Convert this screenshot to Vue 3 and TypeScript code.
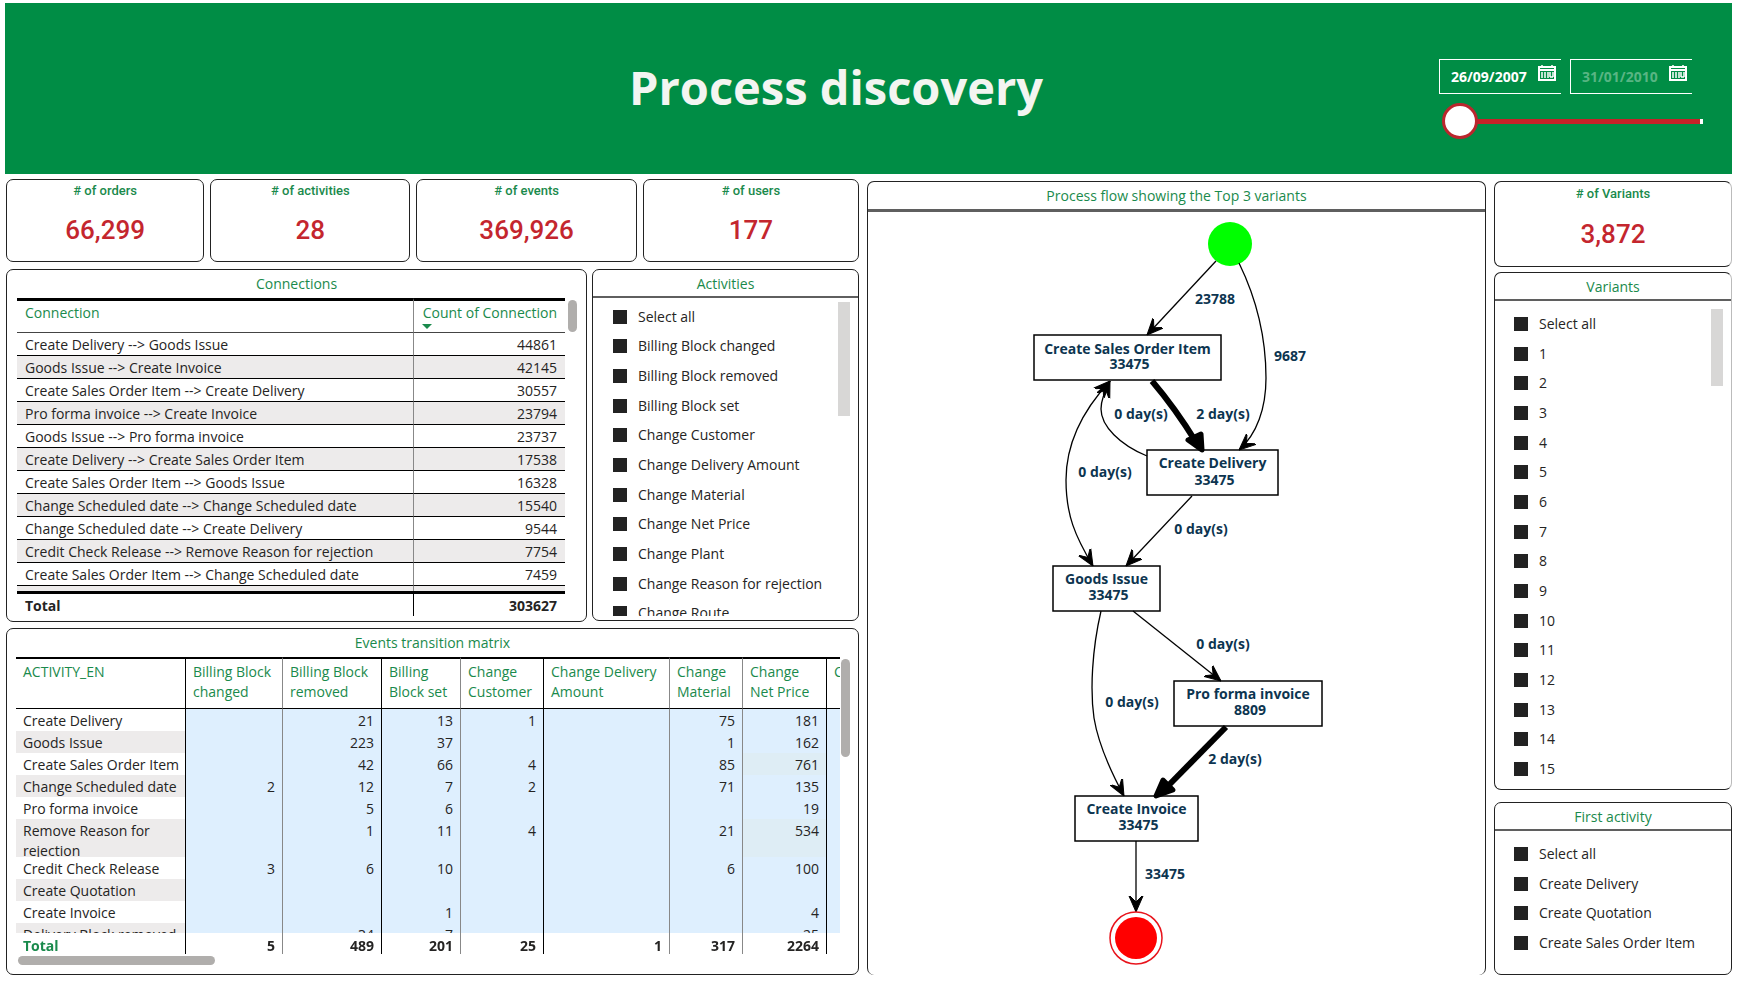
<script setup lang="ts">
import { ref } from 'vue'

interface Kpi { label: string; value: string }
interface Connection { name: string; count: number | null }
interface MatrixColumn { lines: string[]; width: number; total: string; strong: boolean }
interface MatrixRow { name: string; values: string[]; tall?: boolean }
interface FlowNode { name: string; count: string; x: number; y: number; w: number; h: number; nameY: number; countY: number }
interface FlowLabel { text: string; x: number; y: number }

const kpis: Kpi[] = [
  { label: '# of orders', value: '66,299' },
  { label: '# of activities', value: '28' },
  { label: '# of events', value: '369,926' },
  { label: '# of users', value: '177' },
]

const connections: Connection[] = [
  { name: 'Create Delivery --> Goods Issue', count: 44861 },
  { name: 'Goods Issue --> Create Invoice', count: 42145 },
  { name: 'Create Sales Order Item --> Create Delivery', count: 30557 },
  { name: 'Pro forma invoice --> Create Invoice', count: 23794 },
  { name: 'Goods Issue --> Pro forma invoice', count: 23737 },
  { name: 'Create Delivery --> Create Sales Order Item', count: 17538 },
  { name: 'Create Sales Order Item --> Goods Issue', count: 16328 },
  { name: 'Change Scheduled date --> Change Scheduled date', count: 15540 },
  { name: 'Change Scheduled date --> Create Delivery', count: 9544 },
  { name: 'Credit Check Release --> Remove Reason for rejection', count: 7754 },
  { name: 'Create Sales Order Item --> Change Scheduled date', count: 7459 },
  { name: '', count: null },
]

const activities: string[] = [
  'Select all', 'Billing Block changed', 'Billing Block removed', 'Billing Block set',
  'Change Customer', 'Change Delivery Amount', 'Change Material', 'Change Net Price',
  'Change Plant', 'Change Reason for rejection', 'Change Route',
]
const variants: string[] = ['Select all', ...Array.from({ length: 15 }, (_, i) => String(i + 1))]
const firstActivities: string[] = ['Select all', 'Create Delivery', 'Create Quotation', 'Create Sales Order Item']

const columns: MatrixColumn[] = [
  { lines: ['Billing Block', 'changed'], width: 97, total: '5', strong: false },
  { lines: ['Billing Block', 'removed'], width: 99, total: '489', strong: true },
  { lines: ['Billing', 'Block set'], width: 79, total: '201', strong: false },
  { lines: ['Change', 'Customer'], width: 83, total: '25', strong: true },
  { lines: ['Change Delivery', 'Amount'], width: 126, total: '1', strong: false },
  { lines: ['Change', 'Material'], width: 73, total: '317', strong: false },
  { lines: ['Change', 'Net Price'], width: 84, total: '2264', strong: true },
  { lines: ['Change Plant', ''], width: 100, total: '', strong: false },
]

const matrix: MatrixRow[] = [
  { name: 'Create Delivery', values: ['', '21', '13', '1', '', '75', '181', ''] },
  { name: 'Goods Issue', values: ['', '223', '37', '', '', '1', '162', ''] },
  { name: 'Create Sales Order Item', values: ['', '42', '66', '4', '', '85', '761', ''] },
  { name: 'Change Scheduled date', values: ['2', '12', '7', '2', '', '71', '135', ''] },
  { name: 'Pro forma invoice', values: ['', '5', '6', '', '', '', '19', ''] },
  { name: 'Remove Reason for rejection', values: ['', '1', '11', '4', '', '21', '534', ''], tall: true },
  { name: 'Credit Check Release', values: ['3', '6', '10', '', '', '6', '100', ''] },
  { name: 'Create Quotation', values: ['', '', '', '', '', '', '', ''] },
  { name: 'Create Invoice', values: ['', '', '1', '', '', '', '4', ''] },
  { name: 'Delivery Block removed', values: ['', '34', '7', '', '', '', '25', ''] },
]

const nodes: FlowNode[] = [
  { name: 'Create Sales Order Item', count: '33475', x: 34, y: 135, w: 187, h: 45, nameY: 154, countY: 169 },
  { name: 'Create Delivery', count: '33475', x: 147, y: 250, w: 131, h: 45, nameY: 268, countY: 285 },
  { name: 'Goods Issue', count: '33475', x: 53, y: 366, w: 107, h: 45, nameY: 384, countY: 400 },
  { name: 'Pro forma invoice', count: '8809', x: 174, y: 481, w: 148, h: 45, nameY: 499, countY: 515 },
  { name: 'Create Invoice', count: '33475', x: 75, y: 596, w: 123, h: 45, nameY: 614, countY: 630 },
]

const labels: FlowLabel[] = [
  { text: '23788', x: 215, y: 104 },
  { text: '9687', x: 290, y: 161 },
  { text: '0 day(s)', x: 141, y: 219 },
  { text: '2 day(s)', x: 223, y: 219 },
  { text: '0 day(s)', x: 105, y: 277 },
  { text: '0 day(s)', x: 201, y: 334 },
  { text: '0 day(s)', x: 223, y: 449 },
  { text: '0 day(s)', x: 132, y: 507 },
  { text: '2 day(s)', x: 235, y: 564 },
  { text: '33475', x: 165, y: 679 },
]

const startDate = ref('26/09/2007')
const endDate = ref('31/01/2010')
const rangePosition = ref(0)
</script>

<template>
  <div class="page">
    <header class="banner">
      <h1>Process discovery</h1>
      <div class="period">
        <div class="dates">
          <div class="date">
            <input v-model="startDate" type="text" aria-label="Start date" />
            <button type="button" aria-label="Pick start date">
              <svg viewBox="0 0 18 16"><path d="M1 2h16v13H1z M1 5h16" /><path d="M4 0v3 M14 0v3 M4 7v6 M7 7v6 M10 7v6 M12 7v5 M15 7v5 M12 12h3" /></svg>
            </button>
          </div>
          <div class="date off">
            <input v-model="endDate" type="text" aria-label="End date" />
            <button type="button" aria-label="Pick end date">
              <svg viewBox="0 0 18 16"><path d="M1 2h16v13H1z M1 5h16" /><path d="M4 0v3 M14 0v3 M4 7v6 M7 7v6 M10 7v6 M12 7v5 M15 7v5 M12 12h3" /></svg>
            </button>
          </div>
        </div>
        <input v-model="rangePosition" class="slider" type="range" min="0" max="100" aria-label="Date range" />
      </div>
    </header>

    <main class="board">
      <div class="left">
        <div class="kpis">
          <section v-for="k in kpis" :key="k.label" class="panel kpi">
            <h2>{{ k.label }}</h2>
            <p>{{ k.value }}</p>
          </section>
        </div>

        <div class="middle">
          <section class="panel connections">
            <h2 class="title">Connections</h2>
            <div class="scroller">
              <div class="clip">
                <table class="conn">
                  <thead>
                    <tr>
                      <th scope="col">Connection</th>
                      <th scope="col" class="num">Count of Connection<svg class="sort" viewBox="0 0 10 5"><path d="M0 0h10L5 5z" /></svg></th>
                    </tr>
                  </thead>
                  <tbody>
                    <tr v-for="(c, i) in connections" :key="i">
                      <td>{{ c.name }}</td>
                      <td class="num">{{ c.count }}</td>
                    </tr>
                  </tbody>
                  <tfoot>
                    <tr><td>Total</td><td class="num">303627</td></tr>
                  </tfoot>
                </table>
              </div>
              <div class="thumb"></div>
            </div>
          </section>

          <section class="panel slicer activities">
            <h2 class="title ruled">Activities</h2>
            <div class="scroller">
              <ul>
                <li v-for="a in activities" :key="a"><label><input type="checkbox" />{{ a }}</label></li>
              </ul>
              <div class="bar"></div>
            </div>
          </section>
        </div>

        <section class="panel events">
          <h2 class="title">Events transition matrix</h2>
          <div class="scroller">
            <div class="clip">
              <table class="matrix">
                <colgroup>
                  <col class="first" />
                  <col v-for="(c, i) in columns" :key="i" :style="{ width: c.width + 'px' }" />
                </colgroup>
                <thead>
                  <tr>
                    <th scope="col" class="strong">ACTIVITY_EN</th>
                    <th v-for="(c, i) in columns" :key="i" scope="col" :class="{ strong: c.strong }">{{ c.lines[0] }}<br />{{ c.lines[1] }}</th>
                  </tr>
                </thead>
                <tbody>
                  <tr v-for="r in matrix" :key="r.name" :class="{ tall: r.tall }">
                    <th scope="row" class="strong"><div>{{ r.name }}</div></th>
                    <td v-for="(v, i) in r.values" :key="i" :class="{ strong: columns[i].strong, warm: Number(v) > 500 }">{{ v }}</td>
                  </tr>
                </tbody>
                <tfoot>
                  <tr>
                    <th scope="row" class="strong">Total</th>
                    <td v-for="(c, i) in columns" :key="i" :class="{ strong: c.strong }">{{ c.total }}</td>
                  </tr>
                </tfoot>
              </table>
            </div>
            <div class="thumb"></div>
          </div>
          <div class="hthumb"></div>
        </section>
      </div>

      <section class="panel flow">
        <h2 class="title">Process flow showing the Top 3 variants</h2>
        <svg class="graph" viewBox="-132 12 617 763" role="img" aria-label="Process flow">
          <defs>
            <marker id="vee" viewBox="0 0 16 16" refX="16" refY="8" markerWidth="16" markerHeight="16" markerUnits="userSpaceOnUse" orient="auto-start-reverse">
              <path d="M16 8L0 15L0 14L6 8L0 2L0 1z" stroke="#000" stroke-linejoin="round" />
            </marker>
          </defs>
          <circle cx="230" cy="44" r="22" fill="#0f0" />
          <g class="edges">
            <path d="M216 61L147 135" />
            <path d="M239 63C261 108 266 148 266 178C266 208 257 234 239 250" />
            <path d="M147 256C120 245 101 226 101 209C101 200 105 192 110 181" />
            <path class="both" d="M110 181C85 208 66 240 66 280C66 315 75 336 93 366" />
            <path d="M192 296L126 366" />
            <path d="M133 411L221 481" />
            <path d="M101 411C92 450 90 490 94 518C98 542 111 572 124 596" />
            <path d="M136 641V712" />
          </g>
          <g class="heavy">
            <path d="M152 181Q175 208 196 242" />
            <path d="M226 527L164 590" />
          </g>
          <g class="heads">
            <path d="M188 240L201 234L202 250z" />
            <path d="M163 580L173 590L156 596z" />
          </g>
          <g v-for="n in nodes" :key="n.name">
            <rect :x="n.x" :y="n.y" :width="n.w" :height="n.h" />
            <text :x="n.x + n.w / 2" :y="n.nameY">{{ n.name }}</text>
            <text :x="n.x + n.w / 2 + 2" :y="n.countY">{{ n.count }}</text>
          </g>
          <text v-for="(l, i) in labels" :key="i" :x="l.x" :y="l.y">{{ l.text }}</text>
          <circle cx="136" cy="738" r="26" fill="#fff" stroke="#e8141c" stroke-width="1.5" />
          <circle cx="136" cy="738" r="21" fill="#f00" />
        </svg>
      </section>

      <div class="right">
        <section class="panel kpi open">
          <h2># of Variants</h2>
          <p>3,872</p>
        </section>
        <section class="panel slicer variants open">
          <h2 class="title ruled">Variants</h2>
          <div class="scroller">
            <ul>
              <li v-for="v in variants" :key="v"><label><input type="checkbox" />{{ v }}</label></li>
            </ul>
            <div class="bar"></div>
          </div>
        </section>
        <section class="panel slicer first-activity">
          <h2 class="title ruled">First activity</h2>
          <div class="scroller">
            <ul>
              <li v-for="f in firstActivities" :key="f"><label><input type="checkbox" />{{ f }}</label></li>
            </ul>
          </div>
        </section>
      </div>
    </main>
  </div>
</template>

<style>
body { margin: 0; background: #fff; }
</style>

<style scoped>
* { box-sizing: border-box; }
.page {
  min-height: 100vh;
  padding: 3px 5px 6px;
  display: flex;
  flex-direction: column;
  gap: 5px;
  color: #252423;
  font: 14px/20px "Open Sans", "Noto Sans", sans-serif;
}
h1, h2, p, ul { margin: 0; padding: 0; }

.banner {
  display: grid;
  grid-template-columns: 228px 1fr 293px;
  height: 171px;
  background: #008d45;
}
h1 {
  grid-column: 2;
  padding-top: 50px;
  text-align: center;
  color: #f3f5f1;
  font: 700 47px/68px "Open Sans", sans-serif;
}
.period { padding-top: 56px; }
.dates { display: flex; gap: 9px; }
.date {
  display: flex;
  width: 122px;
  height: 35px;
  border: 1px solid #fff;
  border-right: 0;
}
.date input {
  flex: 1;
  min-width: 0;
  padding: 1px 0 0 11px;
  border: 0;
  background: none;
  color: #fff;
  font: 700 14px/20px "Noto Sans", sans-serif;
}
.date.off input { color: #58b583; }
.date button { align-self: flex-start; width: 23px; padding: 5px 5px 0 0; border: 0; background: none; }
.date svg { display: block; width: 18px; height: 16px; fill: none; stroke: #fff; stroke-width: 2; }
.date svg path + path { stroke-width: 1.5; }
.slider {
  appearance: none;
  display: block;
  width: 261px;
  height: 36px;
  margin: 9px 0 0 3px;
  background: linear-gradient(90deg, #c62128 248px, #fff 248px) 10px center / 251px 5px no-repeat;
  border-radius: 3px;
}
.slider::-webkit-slider-thumb {
  appearance: none;
  width: 36px;
  height: 36px;
  border: 3px solid #bb262d;
  border-radius: 50%;
  background: #fff;
}

.board { flex: 1; display: grid; grid-template-columns: 853fr 619fr 238fr; gap: 8px; padding-left: 1px; }
.left { display: grid; grid-template-rows: 84px 353px 1fr; gap: 6px; min-width: 0; }
.kpis { display: grid; grid-template-columns: 198fr 200fr 220fr 216fr; gap: 6px; padding-bottom: 1px; }
.middle { display: grid; grid-template-columns: 581fr 267fr; gap: 5px; }
.right { display: grid; grid-template-rows: 86px 518px 1fr; row-gap: 5px; margin-top: 2px; }
.panel { border: 1px solid #222; border-radius: 7px; min-width: 0; overflow: hidden; display: flex; flex-direction: column; }
.open { border-right-color: #bbb; }

.kpi { text-align: center; }
.kpi h2 { padding-top: 3px; color: #1a8a4c; font: 500 13px/16px Roboto, sans-serif; }
.kpi p { padding-top: 14px; color: #c4262e; font: 500 26px/34px Roboto, sans-serif; }
.right .kpi h2 { padding-top: 4px; }
.right .kpi p { padding-top: 15px; }

.title { height: 28px; color: #1a8a4c; text-align: center; font-weight: 400; font-size: 14px; line-height: 28px; }
.title.ruled { border-bottom: 2px solid #5f5f5f; }
.scroller { display: flex; min-height: 0; }
.clip { flex: 1; min-width: 0; overflow: hidden; }
.thumb { width: 9px; border-radius: 5px; background: #b0aeac; }
table { border-collapse: separate; border-spacing: 0; table-layout: fixed; }
th { font-weight: 400; text-align: left; color: #1a8a4c; }

.connections .scroller { padding: 0 9px 0 10px; gap: 3px; }
.connections .clip { height: 318px; }
.connections .thumb { height: 32px; margin-top: 2px; }
.conn { width: 100%; }
.conn th, .conn td { padding: 0 8px; white-space: nowrap; }
.conn .num { width: 151px; text-align: right; }
.conn th { position: relative; height: 35px; border-top: 3px solid #000; border-bottom: 1px solid #444; vertical-align: top; line-height: 24px; }
.conn th:first-child, .conn tbody td:first-child { border-right: 1px solid #888; }
.sort { position: absolute; left: 8px; bottom: 3px; width: 10px; height: 5px; fill: #1a8a4c; }
.conn tbody td { height: 23px; padding-top: 2px; border-bottom: 1px solid #000; line-height: 20px; }
.conn tbody tr:nth-child(even) td { background: #edebeb; }
.conn tfoot td { position: sticky; bottom: 0; height: 25px; padding-top: 2px; background: #fff; border-top: 3px solid #000; font-weight: 700; }
.conn tfoot td:first-child { border-right: 1px solid #000; }

.slicer ul { flex: 1; display: grid; grid-auto-rows: 1fr; list-style: none; }
.slicer label { display: flex; align-items: center; gap: 11px; height: 100%; white-space: nowrap; }
.slicer input { appearance: none; width: 14px; height: 14px; margin: 0; background: #222; }
.bar { width: 12px; background: #d8d7d6; }
.activities { margin-bottom: 1px; }
.activities .scroller { height: 318px; padding: 4px 8px 0 20px; overflow: hidden; }
.activities ul { height: 326px; }
.activities .bar { height: 114px; }
.variants .scroller { padding: 8px 8px 0 19px; }
.variants ul { height: 475px; }
.variants .bar { height: 77px; }
.first-activity { margin-top: 7px; }
.first-activity .scroller { padding: 8px 8px 0 19px; }
.first-activity ul { height: 119px; }

.events .scroller { padding: 0 8px 0 9px; gap: 1px; }
.events .clip { height: 297px; }
.events .thumb { height: 98px; margin-top: 2px; }
.matrix { width: 911px; }
.matrix .first { width: 170px; }
.matrix th, .matrix td { padding: 0 7px; border-right: 1px solid #888; vertical-align: top; }
.matrix .strong { border-right-color: #000; }
.matrix thead th { height: 52px; padding-top: 3px; border-top: 2px solid #000; border-bottom: 1px solid #000; white-space: nowrap; }
.matrix tbody tr { height: 22px; }
.matrix tbody th { color: #252423; line-height: 20px; padding: 2px 2px 0 7px; }
.matrix tbody th div { height: 20px; overflow: hidden; }
.matrix .tall th div { height: 36px; }
.matrix tbody tr:nth-child(even) th { background: #edebeb; }
.matrix tbody td { background: #deeffe; text-align: right; padding-top: 2px; line-height: 20px; }
.matrix tbody td.warm { background: #deedf5; }
.matrix tfoot th, .matrix tfoot td { position: sticky; bottom: 0; height: 21px; padding-top: 4px; line-height: 17px; background: #fff; font-weight: 700; text-align: right; }
.matrix tfoot th { text-align: left; }
.hthumb { width: 197px; height: 9px; margin: 2px 0 0 11px; border-radius: 5px; background: #b0aeac; }

.flow { margin-top: 2px; border-bottom: 0; }
.flow .title { height: 30px; border-bottom: 3px solid #5f5f5f; line-height: 27px; }
.graph { display: block; width: 100%; flex: 1; min-height: 0; }
.graph text { fill: #0d3550; text-anchor: middle; font: 700 14px "Open Sans", sans-serif; }
.graph rect { fill: none; stroke: #000; stroke-width: 1.5; }
.edges path { fill: none; stroke: #000; stroke-width: 1.3; marker-end: url(#vee); }
.edges .both { marker-start: url(#vee); }
.heavy path { fill: none; stroke: #000; stroke-width: 6; }
.heads path { stroke: #000; stroke-width: 5; stroke-linejoin: round; }
</style>
